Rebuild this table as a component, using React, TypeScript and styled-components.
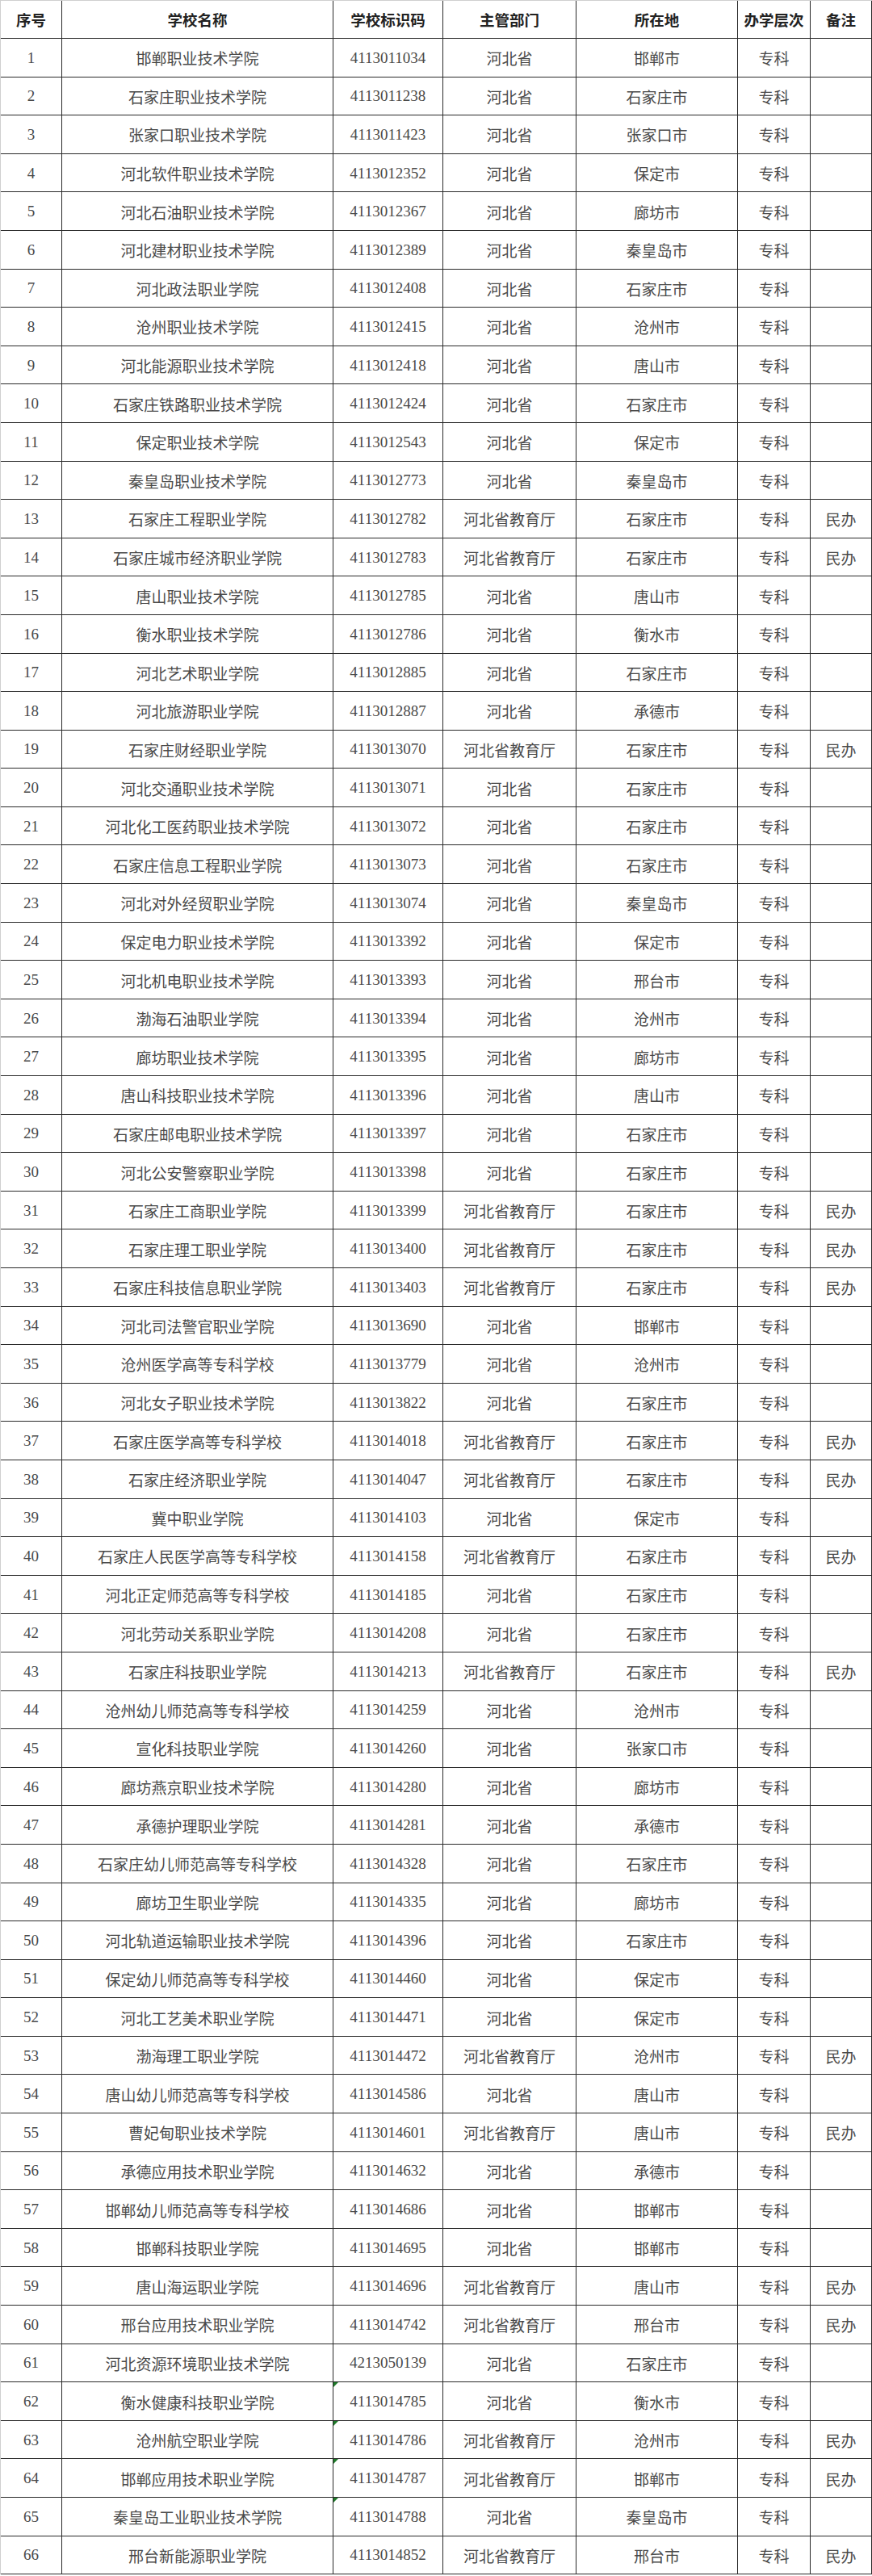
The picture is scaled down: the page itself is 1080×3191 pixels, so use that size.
import React from 'react';
import styled, { createGlobalStyle } from 'styled-components';

type School = [string, string, string, string, boolean];

// [名称, 标识码, 主管部门, 所在地, 民办]
const schools: School[] = [
  ['邯郸职业技术学院', '4113011034', '河北省', '邯郸市', false],
  ['石家庄职业技术学院', '4113011238', '河北省', '石家庄市', false],
  ['张家口职业技术学院', '4113011423', '河北省', '张家口市', false],
  ['河北软件职业技术学院', '4113012352', '河北省', '保定市', false],
  ['河北石油职业技术学院', '4113012367', '河北省', '廊坊市', false],
  ['河北建材职业技术学院', '4113012389', '河北省', '秦皇岛市', false],
  ['河北政法职业学院', '4113012408', '河北省', '石家庄市', false],
  ['沧州职业技术学院', '4113012415', '河北省', '沧州市', false],
  ['河北能源职业技术学院', '4113012418', '河北省', '唐山市', false],
  ['石家庄铁路职业技术学院', '4113012424', '河北省', '石家庄市', false],
  ['保定职业技术学院', '4113012543', '河北省', '保定市', false],
  ['秦皇岛职业技术学院', '4113012773', '河北省', '秦皇岛市', false],
  ['石家庄工程职业学院', '4113012782', '河北省教育厅', '石家庄市', true],
  ['石家庄城市经济职业学院', '4113012783', '河北省教育厅', '石家庄市', true],
  ['唐山职业技术学院', '4113012785', '河北省', '唐山市', false],
  ['衡水职业技术学院', '4113012786', '河北省', '衡水市', false],
  ['河北艺术职业学院', '4113012885', '河北省', '石家庄市', false],
  ['河北旅游职业学院', '4113012887', '河北省', '承德市', false],
  ['石家庄财经职业学院', '4113013070', '河北省教育厅', '石家庄市', true],
  ['河北交通职业技术学院', '4113013071', '河北省', '石家庄市', false],
  ['河北化工医药职业技术学院', '4113013072', '河北省', '石家庄市', false],
  ['石家庄信息工程职业学院', '4113013073', '河北省', '石家庄市', false],
  ['河北对外经贸职业学院', '4113013074', '河北省', '秦皇岛市', false],
  ['保定电力职业技术学院', '4113013392', '河北省', '保定市', false],
  ['河北机电职业技术学院', '4113013393', '河北省', '邢台市', false],
  ['渤海石油职业学院', '4113013394', '河北省', '沧州市', false],
  ['廊坊职业技术学院', '4113013395', '河北省', '廊坊市', false],
  ['唐山科技职业技术学院', '4113013396', '河北省', '唐山市', false],
  ['石家庄邮电职业技术学院', '4113013397', '河北省', '石家庄市', false],
  ['河北公安警察职业学院', '4113013398', '河北省', '石家庄市', false],
  ['石家庄工商职业学院', '4113013399', '河北省教育厅', '石家庄市', true],
  ['石家庄理工职业学院', '4113013400', '河北省教育厅', '石家庄市', true],
  ['石家庄科技信息职业学院', '4113013403', '河北省教育厅', '石家庄市', true],
  ['河北司法警官职业学院', '4113013690', '河北省', '邯郸市', false],
  ['沧州医学高等专科学校', '4113013779', '河北省', '沧州市', false],
  ['河北女子职业技术学院', '4113013822', '河北省', '石家庄市', false],
  ['石家庄医学高等专科学校', '4113014018', '河北省教育厅', '石家庄市', true],
  ['石家庄经济职业学院', '4113014047', '河北省教育厅', '石家庄市', true],
  ['冀中职业学院', '4113014103', '河北省', '保定市', false],
  ['石家庄人民医学高等专科学校', '4113014158', '河北省教育厅', '石家庄市', true],
  ['河北正定师范高等专科学校', '4113014185', '河北省', '石家庄市', false],
  ['河北劳动关系职业学院', '4113014208', '河北省', '石家庄市', false],
  ['石家庄科技职业学院', '4113014213', '河北省教育厅', '石家庄市', true],
  ['沧州幼儿师范高等专科学校', '4113014259', '河北省', '沧州市', false],
  ['宣化科技职业学院', '4113014260', '河北省', '张家口市', false],
  ['廊坊燕京职业技术学院', '4113014280', '河北省', '廊坊市', false],
  ['承德护理职业学院', '4113014281', '河北省', '承德市', false],
  ['石家庄幼儿师范高等专科学校', '4113014328', '河北省', '石家庄市', false],
  ['廊坊卫生职业学院', '4113014335', '河北省', '廊坊市', false],
  ['河北轨道运输职业技术学院', '4113014396', '河北省', '石家庄市', false],
  ['保定幼儿师范高等专科学校', '4113014460', '河北省', '保定市', false],
  ['河北工艺美术职业学院', '4113014471', '河北省', '保定市', false],
  ['渤海理工职业学院', '4113014472', '河北省教育厅', '沧州市', true],
  ['唐山幼儿师范高等专科学校', '4113014586', '河北省', '唐山市', false],
  ['曹妃甸职业技术学院', '4113014601', '河北省教育厅', '唐山市', true],
  ['承德应用技术职业学院', '4113014632', '河北省', '承德市', false],
  ['邯郸幼儿师范高等专科学校', '4113014686', '河北省', '邯郸市', false],
  ['邯郸科技职业学院', '4113014695', '河北省', '邯郸市', false],
  ['唐山海运职业学院', '4113014696', '河北省教育厅', '唐山市', true],
  ['邢台应用技术职业学院', '4113014742', '河北省教育厅', '邢台市', true],
  ['河北资源环境职业技术学院', '4213050139', '河北省', '石家庄市', false],
  ['衡水健康科技职业学院', '4113014785', '河北省', '衡水市', false],
  ['沧州航空职业学院', '4113014786', '河北省教育厅', '沧州市', true],
  ['邯郸应用技术职业学院', '4113014787', '河北省教育厅', '邯郸市', true],
  ['秦皇岛工业职业技术学院', '4113014788', '河北省', '秦皇岛市', false],
  ['邢台新能源职业学院', '4113014852', '河北省教育厅', '邢台市', true],
];

const headers = ['序号', '学校名称', '学校标识码', '主管部门', '所在地', '办学层次', '备注'];

// rows whose code cell shows the green "number stored as text" mark
const textMarked = [62, 63, 64, 65];

const App: React.FC = () => {
  return (
    <>
      <GlobalStyle />
      <Sheet>
        {headers.map((h) => (
          <HeadCell key={h}>{h}</HeadCell>
        ))}
        {schools.map(([name, code, dept, city, isPrivate], i) => {
          const no = i + 1;
          return (
            <React.Fragment key={code}>
              <Cell>{no}</Cell>
              <Cell>{name}</Cell>
              <Cell>
                {textMarked.includes(no) && <Marker />}
                {code}
              </Cell>
              <Cell>{dept}</Cell>
              <Cell>{city}</Cell>
              <Cell>专科</Cell>
              <Cell>{isPrivate ? '民办' : ''}</Cell>
            </React.Fragment>
          );
        })}
      </Sheet>
    </>
  );
};

const GlobalStyle = createGlobalStyle`
  html, body {
    margin: 0;
    padding: 0;
    background: #fff;
  }
`;

const Sheet = styled.div`
  width: 1080px;
  box-sizing: border-box;
  display: grid;
  grid-template-columns: 76px 336px 136px 165px 200px 90px 76px;
  grid-template-rows: 47px;
  grid-auto-rows: 47.6px;
  border-top: 1px solid #cfcfcf;
  border-left: 1px solid #cfcfcf;
`;

const Cell = styled.div`
  position: relative;
  box-sizing: border-box;
  display: flex;
  align-items: center;
  justify-content: center;
  padding-top: 1px;
  border-right: 1px solid #2a2a2a;
  border-bottom: 1px solid #2a2a2a;
  font-family: "Liberation Serif", "Noto Sans CJK SC", serif;
  font-size: 19px;
  color: #4a4a4a;
  white-space: nowrap;
`;

const HeadCell = styled(Cell)`
  font-family: "Noto Sans CJK SC", sans-serif;
  font-weight: 700;
  font-size: 18.5px;
  color: #222;
  padding-top: 0;
`;

const Marker = styled.span`
  position: absolute;
  top: 0;
  left: 0;
  width: 0;
  height: 0;
  border-top: 6px solid #1f7a2a;
  border-right: 6px solid transparent;
`;

export default App;
